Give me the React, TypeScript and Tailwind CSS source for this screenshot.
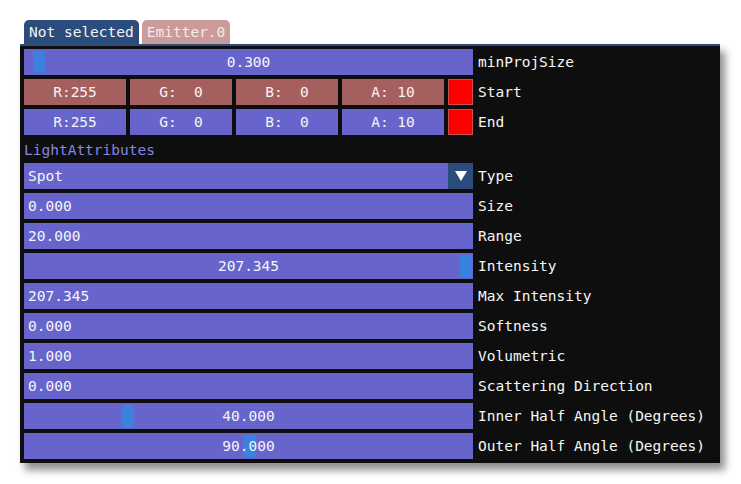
const FIELD = "bg-[#6765cc]";

function Grab({ left }: { left: number }) {
  return (
    <span
      className="absolute top-[2px] bottom-[2px] w-[12px] bg-[#3b82de]"
      style={{ left }}
    />
  );
}

function Row({ label, children }: { label: string; children: React.ReactNode }) {
  return (
    <div className="flex h-[26px] items-stretch">
      <div className="flex w-[449px] shrink-0 items-stretch">{children}</div>
      <span className="ml-[5px] flex items-center whitespace-pre text-[#f6f6f6]">{label}</span>
    </div>
  );
}

function Field({ value, align = "left", grab }: { value: string; align?: "left" | "center"; grab?: number }) {
  return (
    <div
      className={`relative flex flex-1 items-center ${FIELD} px-[4px] text-[#f6f6f6] ${
        align === "center" ? "justify-center" : "justify-start"
      }`}
    >
      {grab !== undefined && <Grab left={grab} />}
      <span className="relative whitespace-pre">{value}</span>
    </div>
  );
}

function ColorRow({ label, tint }: { label: string; tint: string }) {
  const parts = ["R:255", "G:  0", "B:  0", "A: 10"];
  return (
    <Row label={label}>
      <div className="flex flex-1 gap-[4px]">
        {parts.map((p) => (
          <div key={p} className={`flex flex-1 items-center justify-center whitespace-pre text-[#f4f4f4] ${tint}`}>
            {p}
          </div>
        ))}
        <div className="w-[25px] shrink-0 border border-[#c85050] bg-[#ff0000]" />
      </div>
    </Row>
  );
}

export default function App() {
  return (
    <div
      className="min-h-[484px] w-[741px] bg-white pl-[20px] pt-[20px] text-[14.5px] leading-none"
      style={{ fontFamily: '"DejaVu Sans Mono", "Liberation Mono", monospace' }}
    >
      <div className="flex gap-[3px] pl-[4px]">
        <div className="flex h-[24px] items-center rounded-t-[5px] bg-[#2b4c7c] px-[5px] text-[#f4f4f4]">
          Not selected
        </div>
        <div className="flex h-[24px] items-center rounded-t-[5px] bg-[#c99b9b] px-[5px] text-[#f6eaea]">
          Emitter.0
        </div>
      </div>
      <div className="flex w-[700px] flex-col gap-[4px] border-t-2 border-[#2b4c7c] bg-[#0e0e0e] px-[4px] pb-[4px] pt-[3px] shadow-[5px_7px_8px_rgba(0,0,0,0.45)]">
        <Row label="minProjSize">
          <Field value="0.300" align="center" grab={9} />
        </Row>
        <ColorRow label="Start" tint="bg-[#a65f5f]" />
        <ColorRow label="End" tint={FIELD} />
        <div className="flex h-[20px] items-center pt-[3px] text-[#8585e6]">LightAttributes</div>
        <Row label="Type">
          <Field value="Spot" />
          <div className="flex w-[25px] shrink-0 items-center justify-center bg-[#2b4c7c]">
            <svg width="14" height="12" viewBox="0 0 14 12">
              <path d="M1 1h12L7 11z" fill="#ffffff" />
            </svg>
          </div>
        </Row>
        <Row label="Size">
          <Field value="0.000" />
        </Row>
        <Row label="Range">
          <Field value="20.000" />
        </Row>
        <Row label="Intensity">
          <Field value="207.345" align="center" grab={436} />
        </Row>
        <Row label="Max Intensity">
          <Field value="207.345" />
        </Row>
        <Row label="Softness">
          <Field value="0.000" />
        </Row>
        <Row label="Volumetric">
          <Field value="1.000" />
        </Row>
        <Row label="Scattering Direction">
          <Field value="0.000" />
        </Row>
        <Row label="Inner Half Angle (Degrees)">
          <Field value="40.000" align="center" grab={98} />
        </Row>
        <Row label="Outer Half Angle (Degrees)">
          <Field value="90.000" align="center" grab={219} />
        </Row>
      </div>
    </div>
  );
}
